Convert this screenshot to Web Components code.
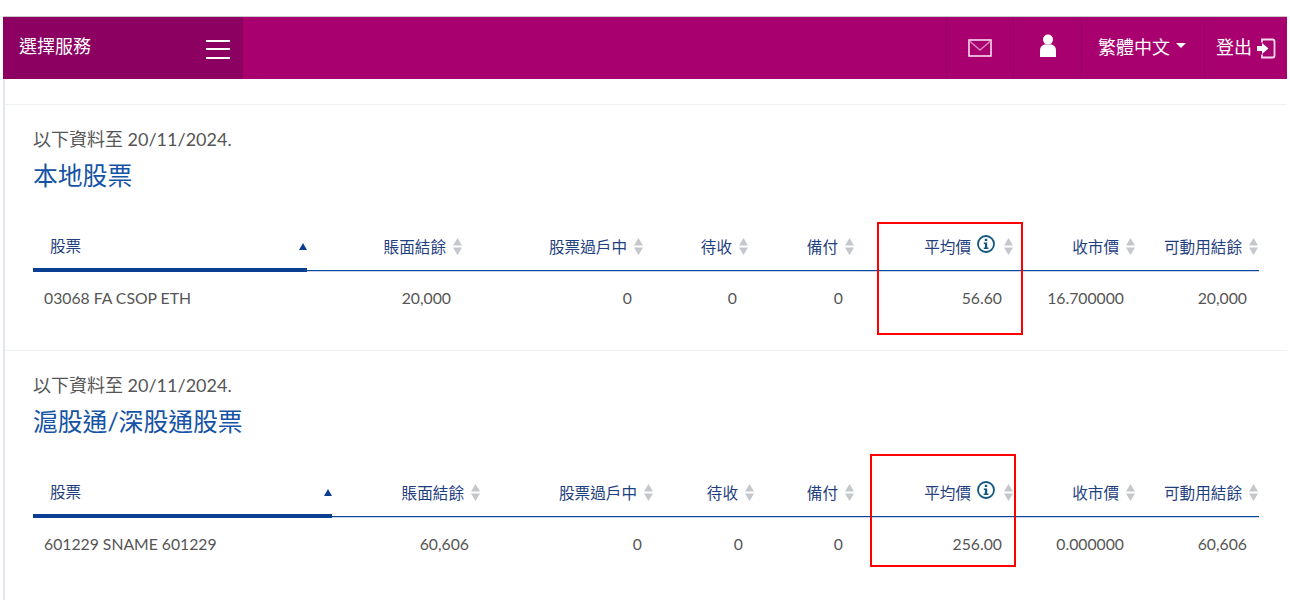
<!DOCTYPE html>
<html lang="zh-Hant">
<head>
<meta charset="utf-8">
<title>股票</title>
<style>
  body {
    margin: 0;
    background: #fff;
    font-family: Lato, "Noto Sans CJK TC", sans-serif;
  }
</style>
</head>
<body>
<app-page>
  <app-header></app-header>
  <stock-section date="20/11/2024" title="本地股票" cols="274px 156px 181px 105px 106px 159px 122px 123px"
    mark-left="872" mark-top="117"
    row="03068 FA CSOP ETH|20,000|0|0|0|56.60|16.700000|20,000"></stock-section>
  <stock-section date="20/11/2024" title="滬股通/深股通股票" cols="299px 149px 173px 101px 100px 159px 122px 123px"
    mark-left="865" mark-top="103"
    row="601229 SNAME 601229|60,606|0|0|0|256.00|0.000000|60,606"></stock-section>
</app-page>

<script>
const HEADINGS = ['股票', '賬面結餘', '股票過戶中', '待收', '備付', '平均價', '收市價', '可動用結餘'];

class AppPage extends HTMLElement {
    constructor() {
        super();
        this.attachShadow({ mode: 'open' });
        this.shadowRoot.innerHTML = `
            <style>
                :host {
                    display: block;
                    padding: 16px 3px 0 3px;
                }
                .content {
                    padding-top: 25px;
                    border-left: 2px solid #e1e6ef;
                    min-height: 496px;
                }
            </style>
            <slot name="head"></slot>
            <div class="content"><slot></slot></div>
        `;
    }

    connectedCallback() {
        this.querySelector('app-header').slot = 'head';
    }
}

class AppHeader extends HTMLElement {
    constructor() {
        super();
        this.attachShadow({ mode: 'open' });
        this.shadowRoot.innerHTML = `
            <style>
                :host {
                    display: flex;
                    height: 62px;
                    background: #a8006f;
                    border-top: 1px solid #c9c9c9;
                    color: #fff;
                    font-size: 18px;
                }
                .brand {
                    width: 240px;
                    box-sizing: border-box;
                    background: #8c0062;
                    display: flex;
                    align-items: center;
                    justify-content: space-between;
                    padding: 0 13px 0 16px;
                }
                .brand span { position: relative; top: -3px; }
                .burger {
                    width: 24px;
                    height: 19px;
                    border-top: 2px solid #fff;
                    border-bottom: 2px solid #fff;
                    box-sizing: border-box;
                    position: relative;
                    top: 1px;
                }
                .burger::after {
                    content: "";
                    display: block;
                    height: 2px;
                    background: #fff;
                    margin-top: 6.5px;
                }
                .spacer { flex: 1; }
                .cell {
                    display: flex;
                    align-items: center;
                    justify-content: center;
                    border-left: 1px solid #98006a;
                    box-sizing: border-box;
                }
                .mail { width: 67px; }
                .user { width: 68px; }
                .lang { width: 123px; gap: 6px; padding-right: 2px; }
                .lang span, .logout span { position: relative; top: -2px; }
                .logout { width: 83px; gap: 5px; justify-content: flex-start; padding-left: 11px; }
                .caret {
                    width: 0;
                    height: 0;
                    border-left: 5.5px solid transparent;
                    border-right: 5.5px solid transparent;
                    border-top: 5px solid #fff;
                    position: relative;
                    top: -3px;
                }
                svg { display: block; }
            </style>
            <div class="brand"><span>選擇服務</span><div class="burger"></div></div>
            <div class="spacer"></div>
            <div class="cell mail">
                <svg width="24" height="18" viewBox="0 0 24 18" fill="none" stroke="#f6dcec" stroke-width="1.6">
                    <rect x="1" y="1" width="22" height="16"/>
                    <path d="M1.5 2 12 11 22.5 2" stroke="#d98abd" stroke-width="1.4"/>
                </svg>
            </div>
            <div class="cell user">
                <svg width="18" height="24" viewBox="0 0 18 24" fill="#fff" style="margin-top:-5px">
                    <circle cx="9" cy="5.6" r="5"/>
                    <path d="M1 23V16.500C1 13 3.500 10.500 6 10.500h6c2.500 0 5 2.500 5 6V23Z"/>
                </svg>
            </div>
            <div class="cell lang"><span>繁體中文</span><i class="caret"></i></div>
            <div class="cell logout">
                <span>登出</span>
                <svg width="19" height="21" viewBox="0 0 19 21" fill="none" style="margin-top:1px">
                    <path d="M5 4.500v-3h10.500a2 2 0 0 1 2 2v14a2 2 0 0 1-2 2H5v-3" stroke="#f6dcec" stroke-width="1.800"/>
                    <path d="M0 8h5V5l6.500 5.500L5 16v-3H0Z" fill="#fff"/>
                </svg>
            </div>
        `;
    }
}

class SortArrows extends HTMLElement {
    constructor() {
        super();
        this.attachShadow({ mode: 'open' });
        this.shadowRoot.innerHTML = `
            <style>
                :host { display: inline-block; width: 11px; height: 17px; margin-top: 2px; }
                svg { display: block; margin-left: 1px; }
            </style>
            <svg width="9" height="17" viewBox="0 0 9 17" fill="#c4c7cc">
                <path d="M4.500 0 9 7.500H0Z"/>
                <path d="M0 9.500h9L4.500 17Z"/>
            </svg>
        `;
    }
}

class InfoIcon extends HTMLElement {
    constructor() {
        super();
        this.attachShadow({ mode: 'open' });
        this.shadowRoot.innerHTML = `
            <style>
                :host { display: inline-block; width: 18px; height: 18px; }
                svg { display: block; }
            </style>
            <svg width="18" height="18" viewBox="0 0 18 18" fill="none">
                <circle cx="9" cy="9" r="8" stroke="#12577f" stroke-width="1.800"/>
                <rect x="7.800" y="3.800" width="2.400" height="2.200" fill="#12577f"/>
                <path d="M6.800 7.500h3.400v5h1.200v1.400H6.700v-1.400h1.200V8.900H6.800Z" fill="#12577f"/>
            </svg>
        `;
    }
}

class StockSection extends HTMLElement {
    constructor() {
        super();
        this.attachShadow({ mode: 'open' });
    }

    connectedCallback() {
        const cells = this.getAttribute('row').split('|');
        const heads = HEADINGS.map((text, i) => {
            if (i === 0) {
                return `<div class="th first"><span>${text}</span><i class="up"></i></div>`;
            }
            const info = i === 5 ? '<info-icon></info-icon>' : '';
            return `<div class="th"><span>${text}</span>${info}<sort-arrows></sort-arrows></div>`;
        }).join('');
        const tds = cells.map((text, i) => `<div class="td ${i === 0 ? 'left' : ''}">${text}</div>`).join('');

        this.shadowRoot.innerHTML = `
            <style>
                :host {
                    display: block;
                    position: relative;
                    box-sizing: border-box;
                    height: 246px;
                    border-top: 1px solid #f0f1f3;
                    padding: 24px 0 0 28px;
                }
                .date {
                    font-size: 18px;
                    line-height: 20px;
                    color: #555;
                    margin-bottom: 11px;
                }
                h2 {
                    margin: 0;
                    font-size: 24.8px;
                    font-weight: 400;
                    line-height: 32px;
                    color: #1453a6;
                }
                .table {
                    display: grid;
                    grid-template-columns: ${this.getAttribute('cols')};
                    margin-top: 30px;
                }
                .th {
                    height: 50px;
                    display: flex;
                    align-items: center;
                    justify-content: flex-end;
                    gap: 6px;
                    border-bottom: 1px solid #c9d4e8;
                    box-shadow: inset 0 -1px 0 #0a4a9c;
                    font-size: 15.6px;
                    color: #1f3f7f;
                    padding-bottom: 2px;
                    box-sizing: border-box;
                    white-space: nowrap;
                }
                .th.first {
                    justify-content: space-between;
                    padding: 0 0 0 17px;
                    border-bottom: 4px solid #0a3f94;
                    box-shadow: none;
                }
                .up {
                    width: 0;
                    height: 0;
                    margin-top: 2px;
                    border-left: 4.5px solid transparent;
                    border-right: 4.5px solid transparent;
                    border-bottom: 7px solid #0a3f94;
                }
                info-icon { margin: -4px 2px 0 0; }
                .td {
                    text-align: right;
                    padding: 0 12px;
                    height: 52px;
                    line-height: 52px;
                    font-size: 15.75px;
                    color: #555;
                    white-space: nowrap;
                }
                .td.left { text-align: left; padding-left: 11px; }
                .mark {
                    position: absolute;
                    left: ${this.getAttribute('mark-left')}px;
                    top: ${this.getAttribute('mark-top')}px;
                    width: 146px;
                    height: 113px;
                    box-sizing: border-box;
                    border: 2px solid #f00;
                    pointer-events: none;
                }
            </style>
            <div class="date">以下資料至 ${this.getAttribute('date')}.</div>
            <h2>${this.getAttribute('title')}</h2>
            <div class="table">${heads}${tds}</div>
            <div class="mark"></div>
        `;
    }
}

customElements.define('app-page', AppPage);
customElements.define('app-header', AppHeader);
customElements.define('sort-arrows', SortArrows);
customElements.define('info-icon', InfoIcon);
customElements.define('stock-section', StockSection);
</script>
</body>
</html>
